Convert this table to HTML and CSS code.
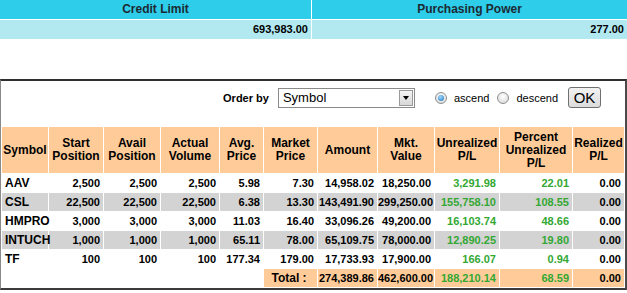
FILE: index.html
```html
<html lang="en">
  <head>
    <meta charset="UTF-8" />
    <title>Portfolio</title>
    <link rel="stylesheet" href="styles.css">
  </head>
  <body>
    <div class="summary">
      <div class="summary-head">Credit Limit</div>
      <div class="summary-head">Purchasing Power</div>
      <div class="summary-value">693,983.00</div>
      <div class="summary-value">277.00</div>
    </div>

    <div class="panel">
      <form class="order-bar" action="/">
        <label class="order-label">Order by</label>
        <div class="select">
          <span class="select-value">Symbol</span>
          <span class="select-arrow"></span>
        </div>
        <span class="radio checked"></span>
        <span class="radio-text">ascend</span>
        <span class="radio"></span>
        <span class="radio-text">descend</span>
        <button type="button" class="ok">OK</button>
      </form>

      <table class="portfolio">
        <colgroup>
          <col style="width: 46px" />
          <col style="width: 54px" />
          <col style="width: 56px" />
          <col style="width: 58px" />
          <col style="width: 43px" />
          <col style="width: 53px" />
          <col style="width: 59px" />
          <col style="width: 56px" />
          <col style="width: 64px" />
          <col style="width: 72px" />
          <col style="width: 51px" />
        </colgroup>
        <thead>
          <tr>
            <th>Symbol</th>
            <th>Start<br />Position</th>
            <th>Avail<br />Position</th>
            <th>Actual<br />Volume</th>
            <th>Avg.<br />Price</th>
            <th>Market<br />Price</th>
            <th>Amount</th>
            <th>Mkt.<br />Value</th>
            <th>Unrealized<br />P/L</th>
            <th>Percent<br />Unrealized<br />P/L</th>
            <th>Realized<br />P/L</th>
          </tr>
        </thead>
        <tbody>
          <tr>
            <td class="sym">AAV</td>
            <td>2,500</td><td>2,500</td><td>2,500</td><td>5.98</td><td>7.30</td>
            <td>14,958.02</td><td>18,250.00</td>
            <td class="gain">3,291.98</td><td class="gain">22.01</td><td>0.00</td>
          </tr>
          <tr class="alt">
            <td class="sym">CSL</td>
            <td>22,500</td><td>22,500</td><td>22,500</td><td>6.38</td><td>13.30</td>
            <td>143,491.90</td><td>299,250.00</td>
            <td class="gain">155,758.10</td><td class="gain">108.55</td><td>0.00</td>
          </tr>
          <tr>
            <td class="sym">HMPRO</td>
            <td>3,000</td><td>3,000</td><td>3,000</td><td>11.03</td><td>16.40</td>
            <td>33,096.26</td><td>49,200.00</td>
            <td class="gain">16,103.74</td><td class="gain">48.66</td><td>0.00</td>
          </tr>
          <tr class="alt">
            <td class="sym">INTUCH</td>
            <td>1,000</td><td>1,000</td><td>1,000</td><td>65.11</td><td>78.00</td>
            <td>65,109.75</td><td>78,000.00</td>
            <td class="gain">12,890.25</td><td class="gain">19.80</td><td>0.00</td>
          </tr>
          <tr>
            <td class="sym">TF</td>
            <td>100</td><td>100</td><td>100</td><td>177.34</td><td>179.00</td>
            <td>17,733.93</td><td>17,900.00</td>
            <td class="gain">166.07</td><td class="gain">0.94</td><td>0.00</td>
          </tr>
          <tr class="total">
            <td class="blank" colspan="5"></td>
            <td class="total-label">Total :</td>
            <td>274,389.86</td><td>462,600.00</td>
            <td class="gain">188,210.14</td><td class="gain">68.59</td><td>0.00</td>
          </tr>
        </tbody>
      </table>
    </div>
  </body>
</html>
```

FILE: styles.css
```css
body {
  margin: 0;
  font-family: "Liberation Sans", Arial, sans-serif;
  color: #000;
  background: #fff;
}

.summary {
  display: grid;
  grid-template-columns: 311px 1fr;
  gap: 1px;
  width: 627px;
}

.summary-head {
  height: 19px;
  line-height: 19px;
  background-color: #2ecdea;
  color: #1c2a33;
  font-size: 12px;
  font-weight: bold;
  text-align: center;
}

.summary-value {
  height: 19px;
  line-height: 19px;
  padding-right: 3px;
  background-color: #b2e9f1;
  font-size: 11px;
  font-weight: bold;
  text-align: right;
}

.panel {
  box-sizing: border-box;
  width: 627px;
  margin-top: 40px;
  border: 2px solid #4a4a4a;
  border-top-color: #2e2e2e;
  border-left: 1px solid #8a8a8a;
  border-bottom-color: #3c3c3c;
}

.order-bar {
  display: flex;
  align-items: center;
  justify-content: flex-end;
  height: 21px;
  margin: 6px 0 0 0;
  padding-right: 24px;
  font-size: 11px;
}

.order-label {
  font-weight: bold;
  margin-right: 9px;
}

.select {
  display: flex;
  box-sizing: border-box;
  width: 137px;
  height: 20px;
  border: 1px solid #8a8a8a;
  background: #fff;
  margin-right: 20px;
}

.select-value {
  flex: 1;
  padding-left: 4px;
  font-size: 13px;
  line-height: 18px;
}

.select-arrow {
  box-sizing: border-box;
  width: 14px;
  margin: 1px;
  border: 1px solid #9a9a9a;
  background: linear-gradient(#f4f4f4, #d8d8d8);
  display: flex;
  align-items: center;
  justify-content: center;
}

.select-arrow::after {
  content: "";
  border-left: 3px solid transparent;
  border-right: 3px solid transparent;
  border-top: 4px solid #000;
}

.radio {
  box-sizing: border-box;
  width: 12px;
  height: 12px;
  border: 1px solid #8e8f8f;
  border-radius: 50%;
  background: radial-gradient(circle at 50% 35%, #ffffff, #d4d4d4);
  margin-right: 7px;
  display: flex;
  align-items: center;
  justify-content: center;
}

.radio.checked::after {
  content: "";
  width: 6px;
  height: 6px;
  border-radius: 50%;
  background: radial-gradient(circle at 40% 35%, #9fdcff, #1a6fb8);
}

.radio-text {
  margin-right: 8px;
}

.radio-text:last-of-type {
  margin-right: 10px;
}

.ok {
  box-sizing: border-box;
  width: 33px;
  height: 21px;
  padding: 0;
  border: 1px solid #707070;
  border-radius: 3px;
  background: linear-gradient(#f2f2f2, #dcdcdc);
  font-family: "Liberation Sans", Arial, sans-serif;
  font-size: 15px;
  color: #000;
}

.portfolio {
  width: 624px;
  margin-top: 18px;
  table-layout: fixed;
  border-collapse: separate;
  border-spacing: 1px;
  font-size: 11px;
  font-weight: bold;
}

.portfolio th {
  height: 46px;
  padding: 0;
  line-height: 13px;
  background-color: #ffcc99;
  font-size: 12px;
  text-align: center;
  vertical-align: middle;
}

.portfolio td {
  height: 18px;
  padding: 0 3px 0 0;
  text-align: right;
  white-space: nowrap;
}

.portfolio td.sym {
  padding-left: 3px;
  text-align: left;
  font-size: 12px;
}

.portfolio tr.alt td {
  background-color: #d3d3d3;
}

.portfolio .gain {
  color: #33a833;
}

.portfolio tr.total td {
  background-color: #ffcc99;
}

.portfolio tr.total td.blank {
  background-color: transparent;
}

.portfolio td.total-label {
  text-align: center;
  font-size: 12px;
}
```
